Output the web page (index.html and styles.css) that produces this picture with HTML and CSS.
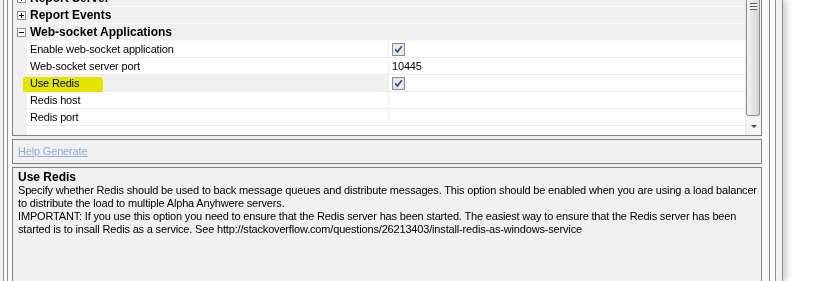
FILE: index.html
```html
<!DOCTYPE html>
<html lang="en">
<head>
  <meta charset="UTF-8">
  <title>Web-socket Applications - Properties</title>
  <link rel="stylesheet" href="styles.css">
</head>
<body>
  <div class="win">
    <div class="frame-outer">
      <div class="frame-inner">
        <div class="client">

          <!-- Property grid -->
          <div class="grid">
            <div class="rows">
              <div class="row cat">
                <span class="gutter"><svg class="expander" width="9" height="9" viewBox="0 0 9 9"><rect x="0.5" y="0.5" width="8" height="8" fill="#fff" stroke="#919191"/><path d="M2 4.5h5M4.5 2v5" stroke="#000"/></svg></span>
                <span class="cat-label">Report Server</span>
              </div>
              <div class="row cat">
                <span class="gutter"><svg class="expander" width="9" height="9" viewBox="0 0 9 9"><rect x="0.5" y="0.5" width="8" height="8" fill="#fff" stroke="#919191"/><path d="M2 4.5h5M4.5 2v5" stroke="#000"/></svg></span>
                <span class="cat-label">Report Events</span>
              </div>
              <div class="row cat">
                <span class="gutter"><svg class="expander" width="9" height="9" viewBox="0 0 9 9"><rect x="0.5" y="0.5" width="8" height="8" fill="#fff" stroke="#919191"/><path d="M2 4.5h5" stroke="#000"/></svg></span>
                <span class="cat-label">Web-socket Applications</span>
              </div>
              <div class="row">
                <span class="gutter"></span>
                <span class="name">Enable web-socket application</span>
                <span class="value">
                  <svg class="check" width="13" height="13" viewBox="0 0 13 13"><rect x="0.5" y="0.5" width="12" height="12" fill="#dde1e8" stroke="#8f8f8f"/><rect x="2" y="2" width="9" height="9" fill="#e8ebf1"/><path d="M3.2 6.4 5.4 9 9.8 3.2" stroke="#34488a" stroke-width="1.7" fill="none"/></svg>
                </span>
              </div>
              <div class="row">
                <span class="gutter"></span>
                <span class="name">Web-socket server port</span>
                <span class="value">10445</span>
              </div>
              <div class="row selected">
                <span class="marker"></span>
                <span class="gutter"></span>
                <span class="name">Use Redis</span>
                <span class="value">
                  <svg class="check" width="13" height="13" viewBox="0 0 13 13"><rect x="0.5" y="0.5" width="12" height="12" fill="#dde1e8" stroke="#8f8f8f"/><rect x="2" y="2" width="9" height="9" fill="#e8ebf1"/><path d="M3.2 6.4 5.4 9 9.8 3.2" stroke="#34488a" stroke-width="1.7" fill="none"/></svg>
                </span>
              </div>
              <div class="row">
                <span class="gutter"></span>
                <span class="name">Redis host</span>
                <span class="value"></span>
              </div>
              <div class="row">
                <span class="gutter"></span>
                <span class="name">Redis port</span>
                <span class="value"></span>
              </div>
              <div class="rows-fill">
                <span class="gutter"></span>
              </div>
            </div>
            <div class="scrollbar">
              <div class="thumb"><span class="grip"></span></div>
              <div class="arrow-down"><span class="tri"></span></div>
            </div>
          </div>

          <!-- Command area -->
          <div class="help-bar">
            <a href="#">Help Generate</a>
          </div>

          <!-- Description area -->
          <div class="desc">
            <div class="desc-title">Use Redis</div>
            <div class="desc-text">
              Specify whether Redis should be used to back message queues and distribute messages. This option should be enabled when you are using a load balancer<br>
              to distribute the load to multiple Alpha Anyhwere servers.<br>
              IMPORTANT: If you use this option you need to ensure that the Redis server has been started. The easiest way to ensure that the Redis server has been<br>
              started is to insall Redis as a service. See http://stackoverflow.com/questions/26213403/install-redis-as-windows-service
            </div>
          </div>

        </div>
      </div>
    </div>
  </div>
</body>
</html>
```

FILE: styles.css
```css
body {
  margin: 0;
  height: 281px;
  overflow: hidden;
  background-color: #fff;
  font-family: "Liberation Sans", Arial, sans-serif;
  font-size: 11px;
  letter-spacing: -0.17px;
  color: #000;
}

/* Window frame */
.win {
  width: 773px;
  height: 281px;
  padding: 0 6px 0 3px;
  border-right: 1px solid #8c8c8c;
  background-color: #f2f2f2;
  box-shadow: 4px 0 6px rgba(0, 0, 0, 0.18);
}

.frame-outer {
  height: 100%;
  padding: 0 5px 0 3px;
  border-left: 1px solid #8c8c8c;
  border-right: 1px solid #8c8c8c;
  background-color: #fbfbfb;
}

.frame-inner {
  height: 100%;
  padding: 0 7px 0 4px;
  border-left: 1px solid #8c8c8c;
  border-right: 1px solid #8c8c8c;
  background-color: #f8f8f8;
}

.client {
  height: 100%;
  background-color: #f0f0f0;
}

/* Property grid */
.grid {
  display: flex;
  height: 136px;
  box-sizing: border-box;
  border: 1px solid #7f8389;
  border-top: none;
  overflow: hidden;
}

.rows {
  flex: 1;
  display: flex;
  flex-direction: column;
  margin-top: -10px;
  background-color: #fff;
}

.row {
  position: relative;
  display: flex;
  height: 17px;
  line-height: 16px;
}

.gutter {
  flex: none;
  width: 14px;
  background-color: #f0f0f0;
}

.name {
  position: relative;
  z-index: 2;
  flex: none;
  width: 358px;
  padding-left: 3px;
  border-right: 1px solid #f0f0f0;
  border-bottom: 1px solid #ececec;
  white-space: nowrap;
}

.value {
  flex: 1;
  padding-left: 3px;
  border-bottom: 1px solid #ececec;
}

.check {
  display: block;
  margin-top: 2px;
}

.row.cat {
  background-color: #f0f0f0;
}

.row.cat .gutter {
  padding: 4px 0 0 4px;
  width: 10px;
}

.expander {
  display: block;
}

.cat-label {
  flex: 1;
  padding-left: 3px;
  font-size: 12px;
  font-weight: bold;
  letter-spacing: 0;
  border-bottom: 1px solid #f8f8f8;
}

.row.selected .name {
  background-color: #f0f0f0;
}

/* Highlighter mark over the selected label */
.marker {
  position: absolute;
  z-index: 3;
  left: 10px;
  top: 2px;
  width: 80px;
  height: 15px;
  background-color: #f4f400;
  border-radius: 2px 4px 3px 1px;
  mix-blend-mode: multiply;
}

.rows-fill {
  flex: 1;
  display: flex;
}

/* Scrollbar */
.scrollbar {
  flex: none;
  width: 16px;
  display: flex;
  flex-direction: column;
  background-color: #f4f4f4;
  border-left: 1px solid #e6e6e6;
  box-sizing: border-box;
}

.thumb {
  height: 115px;
  margin: 0 1px 0 0;
  border: 1px solid #8f8f8f;
  border-top: none;
  border-radius: 0 0 3px 3px;
  background: linear-gradient(to right, #f3f3f3, #d6d6d6);
}

.grip {
  display: block;
  width: 7px;
  height: 7px;
  margin: 3px 0 0 3px;
  background: repeating-linear-gradient(to bottom, #5c5c5c 0, #5c5c5c 1px, #f0f0f0 1px, #f0f0f0 3px);
}

.arrow-down {
  flex: 1;
  display: flex;
  align-items: center;
  justify-content: center;
  padding-top: 2px;
}

.tri {
  width: 0;
  height: 0;
  border-left: 3px solid transparent;
  border-right: 3px solid transparent;
  border-top: 3px solid #4a4a4a;
}

/* Help commands bar */
.help-bar {
  height: 25px;
  box-sizing: border-box;
  margin-top: 3px;
  padding-left: 5px;
  border: 1px solid #7f8389;
  line-height: 23px;
}

.help-bar a {
  color: #94acd3;
  text-decoration: underline;
}

/* Description */
.desc {
  height: 120px;
  margin-top: 3px;
  padding: 2px 5px 0;
  border: 1px solid #7f8389;
  border-bottom: none;
}

.desc-title {
  font-size: 12px;
  font-weight: bold;
  letter-spacing: 0;
  line-height: 14px;
}

.desc-text {
  line-height: 13px;
  white-space: nowrap;
}
```
